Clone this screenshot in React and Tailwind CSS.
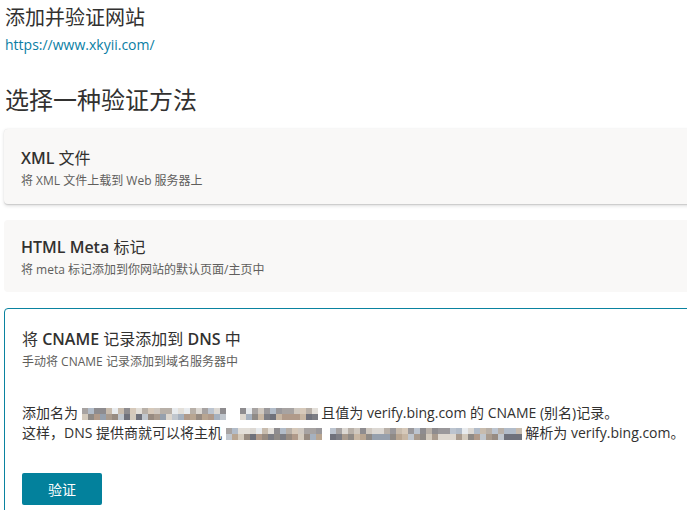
import React from "react";

const palTop = ["#dcd8d3", "#b8b0a8", "#a7a3a2", "#cfc8c0", "#e8ebee", "#9a989b", "#bcc4cf", "#d6c9ba", "#8e8c8f", "#e3dfd9", "#b2bcc9", "#c8bcae"];
const palBot = ["#a99b8e", "#8f8a86", "#c7b6a3", "#7c7d84", "#a6b1bf", "#978b81", "#d3cabd", "#b8a591", "#6f717b", "#ddd7cf", "#96a0ad", "#b09a8a", "#c0c6cd"];

function Mosaic({ n, seed }) {
  const cells = [];
  for (let r = 0; r < 2; r++) {
    for (let i = 0; i < n; i++) {
      const h = i * 7 + seed * 13 + r * 5 + ((i * i + seed) % 11);
      const pal = r === 0 ? palTop : palBot;
      cells.push(
        <span key={r + "-" + i} style={{ background: pal[h % pal.length], gridColumn: i + 1, gridRow: r + 1 }} />
      );
    }
  }
  return (
    <span
      className="inline-grid align-middle"
      style={{ gridTemplateColumns: `repeat(${n}, 6px)`, gridTemplateRows: "6px 6px" }}
    >
      {cells}
    </span>
  );
}

export default function App() {
  const font = { fontFamily: '"Open Sans", "Noto Sans CJK SC", sans-serif' };
  return (
    <div className="w-[687px] h-[510px] overflow-hidden bg-white text-[#323130]" style={font}>
      <div className="pl-[5px] pt-[4px]">
        <div className="text-[20px] leading-[28px]">添加并验证网站</div>
        <div className="mt-[3px] text-[14px] leading-[20px] text-[#0a7ea4]">https://www.xkyii.com/</div>
        <div className="mt-[29px] text-[24px] leading-[32px]">选择一种验证方法</div>
      </div>

      <div className="ml-[4px] w-[760px] mt-[13px] flex flex-col gap-[16px]">
        <div className="rounded-[4px] bg-[#f9f8f7] shadow-[0_1.6px_3.6px_rgba(0,0,0,0.13),0_0.3px_0.9px_rgba(0,0,0,0.11)] pl-[17px] pt-[18px] pb-[15px]">
          <div className="text-[16px] leading-[22px]"><span className="font-semibold">XML</span> 文件</div>
          <div className="mt-[4px] text-[12px] leading-[16px] text-[#605e5c]">将 XML 文件上载到 Web 服务器上</div>
        </div>

        <div className="rounded-[4px] bg-[#f9f8f7] pl-[17px] pt-[16px] pb-[14px]">
          <div className="text-[16px] leading-[22px]"><span className="font-semibold">HTML Meta</span> 标记</div>
          <div className="mt-[4px] text-[12px] leading-[16px] text-[#605e5c]">将 meta 标记添加到你网站的默认页面/主页中</div>
        </div>

        <div className="rounded-[4px] border border-[#0a83a0] bg-white pl-[17px] pt-[19px] h-[260px]">
          <div className="text-[16px] leading-[22px]">将 <span className="font-semibold">CNAME</span> 记录添加到 <span className="font-semibold">DNS</span> 中</div>
          <div className="mt-[4px] text-[12px] leading-[16px] text-[#605e5c]">手动将 CNAME 记录添加到域名服务器中</div>
          <div className="mt-[33px] text-[14px] leading-[20px] whitespace-nowrap">
            <div>
              添加名为 <Mosaic n={24} seed={1} /><span className="inline-block w-[14px]" /><Mosaic n={13} seed={4} /> 且值为 verify.bing.com 的 CNAME (别名)记录。
            </div>
            <div>
              这样，DNS 提供商就可以将主机 <Mosaic n={16} seed={7} /><span className="inline-block w-[8px]" /><Mosaic n={32} seed={3} /> 解析为 verify.bing.com。
            </div>
          </div>
          <button className="mt-[30px] w-[80px] h-[32px] rounded-[2px] bg-[#03819c] text-white text-[14px] font-normal">
            验证
          </button>
        </div>
      </div>
    </div>
  );
}
